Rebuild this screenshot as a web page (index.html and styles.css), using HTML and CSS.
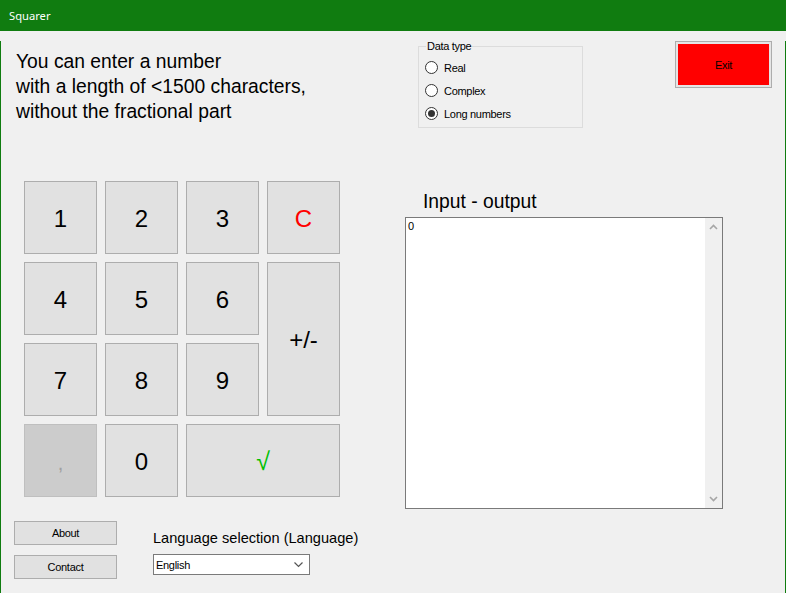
FILE: index.html
```html
<!DOCTYPE html>
<html>
<head>
<meta charset="utf-8">
<link rel="stylesheet" href="styles.css">
</head>
<body>
<div class="window">
  <div class="titlebar">Squarer</div>
  <div class="client">
    <div class="top">
      <div class="intro">You can enter a number<br>with a length of &lt;1500 characters,<br>without the fractional part</div>
      <div class="group">
        <span class="group-title">Data type</span>
        <div class="radio"><span class="circle"></span><span>Real</span></div>
        <div class="radio"><span class="circle"></span><span>Complex</span></div>
        <div class="radio"><span class="circle checked"></span><span>Long numbers</span></div>
      </div>
      <div class="exit"><span class="exit-fill">Exit</span></div>
    </div>
    <div class="middle">
      <div class="keypad">
        <div class="key">1</div>
        <div class="key">2</div>
        <div class="key">3</div>
        <div class="key red">C</div>
        <div class="key">4</div>
        <div class="key">5</div>
        <div class="key">6</div>
        <div class="key tall">+/-</div>
        <div class="key">7</div>
        <div class="key">8</div>
        <div class="key">9</div>
        <div class="key disabled">,</div>
        <div class="key">0</div>
        <div class="key wide green">√</div>
      </div>
      <div class="io">
        <div class="io-label">Input - output</div>
        <div class="textbox">
          <div class="textbox-text">0</div>
          <div class="scrollbar">
            <svg class="arrow" width="9" height="6" viewBox="0 0 9 6"><path d="M1 5 L4.5 1.5 L8 5" fill="none" stroke="#a6a6a6" stroke-width="1.6"/></svg>
            <svg class="arrow" width="9" height="6" viewBox="0 0 9 6"><path d="M1 1 L4.5 4.5 L8 1" fill="none" stroke="#a6a6a6" stroke-width="1.6"/></svg>
          </div>
        </div>
      </div>
    </div>
    <div class="bottom">
      <div class="buttons">
        <div class="btn">About</div>
        <div class="btn">Contact</div>
      </div>
      <div class="lang">
        <div class="lang-label">Language selection (Language)</div>
        <div class="select">
          <span>English</span>
          <svg width="9" height="6" viewBox="0 0 9 6"><path d="M0.5 0.5 L4.5 4.5 L8.5 0.5" fill="none" stroke="#555" stroke-width="1.2"/></svg>
        </div>
      </div>
    </div>
  </div>
</div>
</body>
</html>
```
FILE: styles.css
```css
html, body {
  margin: 0;
  padding: 0;
  background: #f0f0f0;
}
.window {
  width: 786px;
  height: 593px;
  font-family: "Liberation Sans", Arial, sans-serif;
  color: #000;
  overflow: hidden;
}
.titlebar {
  height: 31px;
  background: #107c10;
  color: #fff;
  font-family: "Noto Sans", "Open Sans", sans-serif;
  font-size: 11.2px;
  line-height: 31px;
  padding-left: 9px;
  box-sizing: border-box;
}
.client {
  height: 562px;
  box-sizing: border-box;
  border: 1px solid #107c10;
  border-top: none;
  background: #f0f0f0;
}
.top {
  display: flex;
  align-items: flex-start;
  margin-top: 10px;
}
.intro {
  margin-left: 15px;
  margin-top: 8px;
  width: 402px;
  font-size: 19.3px;
  line-height: 25px;
}
.group {
  position: relative;
  width: 165px;
  height: 82px;
  box-sizing: border-box;
  margin-top: 5px;
  border: 1px solid #dcdcdc;
  padding: 9px 0 0 6px;
  font-size: 11px;
  letter-spacing: -0.3px;
}
.group-title {
  position: absolute;
  top: -8px;
  left: 7px;
  padding: 0 1px;
  background: #f0f0f0;
  line-height: 14px;
}
.radio {
  display: flex;
  align-items: center;
  height: 23px;
  gap: 6px;
}
.circle {
  width: 13px;
  height: 13px;
  box-sizing: border-box;
  border: 1px solid #333;
  border-radius: 50%;
  background: #fff;
  display: flex;
  align-items: center;
  justify-content: center;
}
.circle.checked::after {
  content: "";
  width: 7px;
  height: 7px;
  border-radius: 50%;
  background: #333;
}
.exit {
  margin-left: 92px;
  width: 97px;
  height: 47px;
  box-sizing: border-box;
  border: 1px solid #adadad;
  padding: 2px;
  background: #e5e5e5;
  display: flex;
}
.exit-fill {
  flex: 1;
  background: #ff0000;
  font-size: 11px;
  letter-spacing: -0.3px;
  display: flex;
  align-items: center;
  justify-content: center;
  padding-top: 1px;
}
.middle {
  display: flex;
  align-items: flex-start;
  margin-top: 53px;
}
.keypad {
  margin-left: 23px;
  display: grid;
  grid-template-columns: repeat(4, 73px);
  grid-auto-rows: 73px;
  gap: 8px;
}
.key {
  box-sizing: border-box;
  border: 1px solid #adadad;
  background: #e1e1e1;
  display: flex;
  align-items: center;
  justify-content: center;
  font-size: 24px;
  padding-top: 2px;
}
.key.red { color: #ff0000; }
.key.green { color: #00c000; font-size: 25px; }
.key.tall { grid-row: span 2; }
.key.wide { grid-column: span 2; }
.key.disabled {
  background: #cccccc;
  border-color: #bfbfbf;
  color: #a0a0a0;
  font-size: 20px;
  padding-top: 6px;
}
.io {
  margin-left: 65px;
  margin-top: 10px;
}
.io-label {
  margin-left: 18px;
  font-size: 19.3px;
  line-height: 22px;
}
.textbox {
  margin-top: 4px;
  width: 318px;
  height: 292px;
  box-sizing: border-box;
  border: 1px solid #7a7a7a;
  background: #fff;
  display: flex;
}
.textbox-text {
  flex: 1;
  font-size: 11px;
  padding: 2px 0 0 2px;
  line-height: 13px;
}
.scrollbar {
  width: 17px;
  background: #f0f0f0;
  display: flex;
  flex-direction: column;
  justify-content: space-between;
  align-items: center;
  padding: 6px 0 6px;
}
.bottom {
  display: flex;
  align-items: flex-start;
  margin-top: 12px;
}
.buttons {
  margin-left: 13px;
  width: 103px;
  display: flex;
  flex-direction: column;
  gap: 10px;
}
.btn {
  height: 24px;
  box-sizing: border-box;
  border: 1px solid #adadad;
  background: #e1e1e1;
  font-size: 11px;
  letter-spacing: -0.3px;
  display: flex;
  align-items: center;
  justify-content: center;
}
.lang {
  margin-left: 36px;
  margin-top: 8px;
}
.lang-label {
  font-size: 14.6px;
  line-height: 18px;
}
.select {
  margin-top: 7px;
  width: 157px;
  height: 21px;
  box-sizing: border-box;
  border: 1px solid #7a7a7a;
  background: #fff;
  font-size: 11px;
  letter-spacing: -0.3px;
  display: flex;
  align-items: center;
  justify-content: space-between;
  padding: 0 6px 0 2px;
}
```
